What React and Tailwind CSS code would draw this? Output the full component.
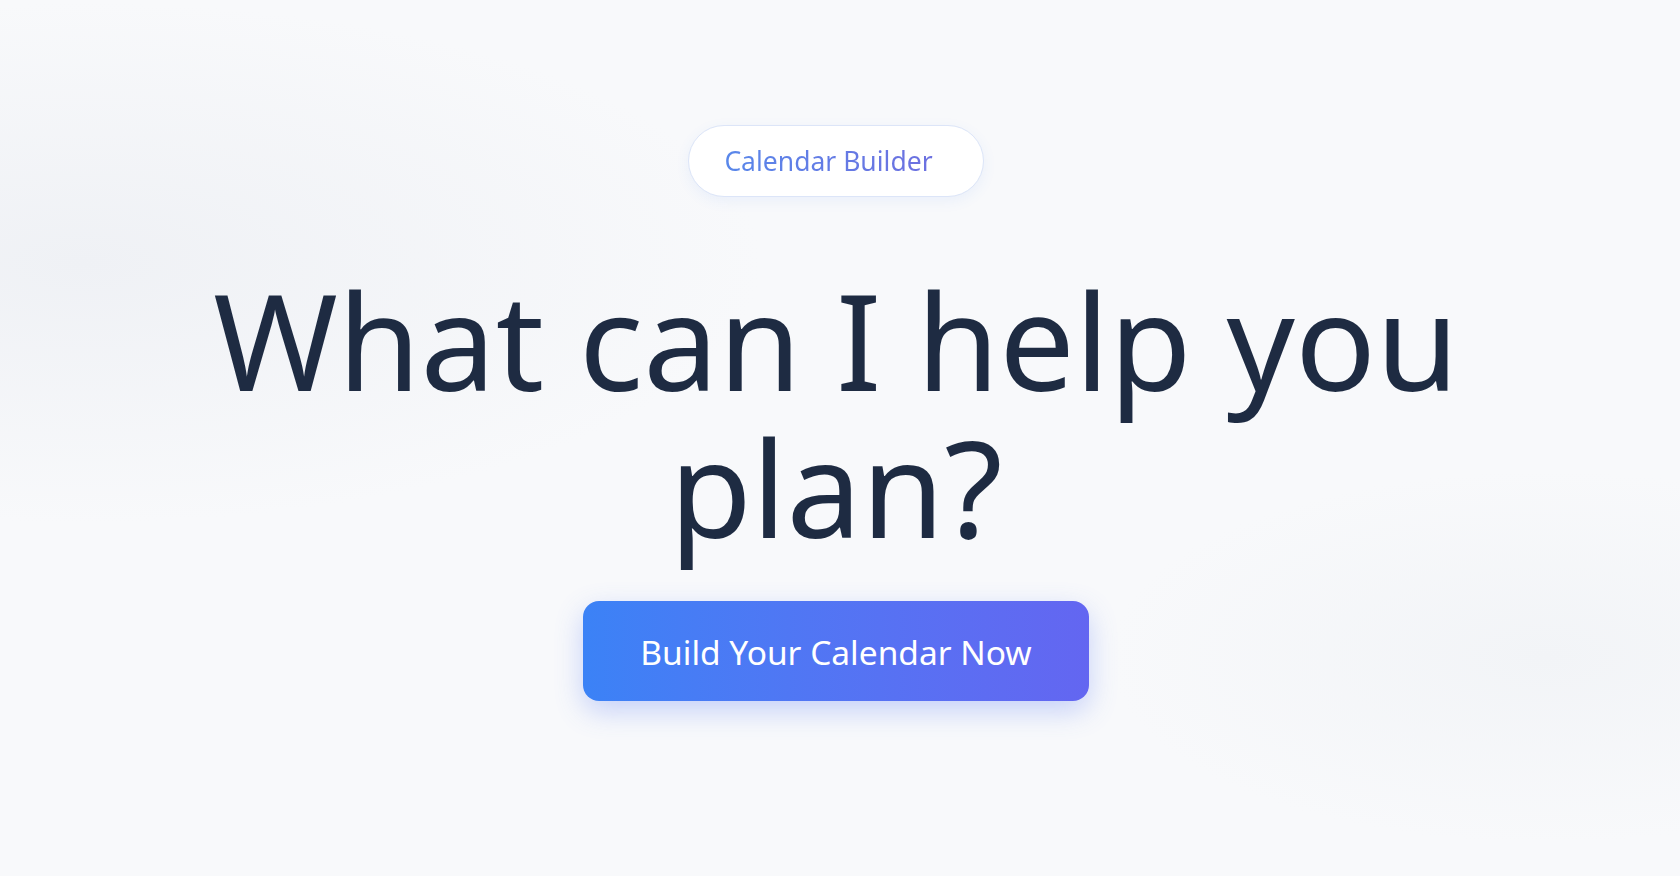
export default function App() {
  return (
    <div
      className="min-h-[876px] w-full bg-[#f8f9fb] bg-[radial-gradient(ellipse_at_5%_30%,#eff1f5_0%,transparent_30%),radial-gradient(ellipse_at_92%_75%,#f2f4f7_0%,transparent_20%)]"
      style={{ fontFamily: '"Noto Sans", "Open Sans", sans-serif' }}
    >
      <main className="flex flex-col items-center pr-[8px] pt-[125px]">
        {/* Badge */}
        <div className="rounded-full border border-[#dce5f8] bg-white py-[15px] pl-[35px] pr-[50px] shadow-[0_4px_14px_rgba(59,130,246,0.08)]">
          <span className="bg-gradient-to-r from-[#5887ea] to-[#6c70e0] bg-clip-text text-[26.5px] leading-[40px] text-transparent">
            Calendar Builder
          </span>
        </div>

        {/* Heading */}
        <h1 className="mt-[69px] max-w-[1300px] text-center text-[134px] font-normal leading-[147px] text-[#1e2b42]">
          What can I help you plan?
        </h1>

        {/* CTA */}
        <button className="mt-[41px] flex h-[100px] items-center rounded-[16px] bg-gradient-to-r from-[#3b82f6] to-[#6366f1] px-[57px] pt-[2px] text-[33.5px] leading-[1.5] text-white shadow-[0_10px_28px_rgba(79,115,245,0.3)]">
          Build Your Calendar Now
        </button>
      </main>
    </div>
  )
}
